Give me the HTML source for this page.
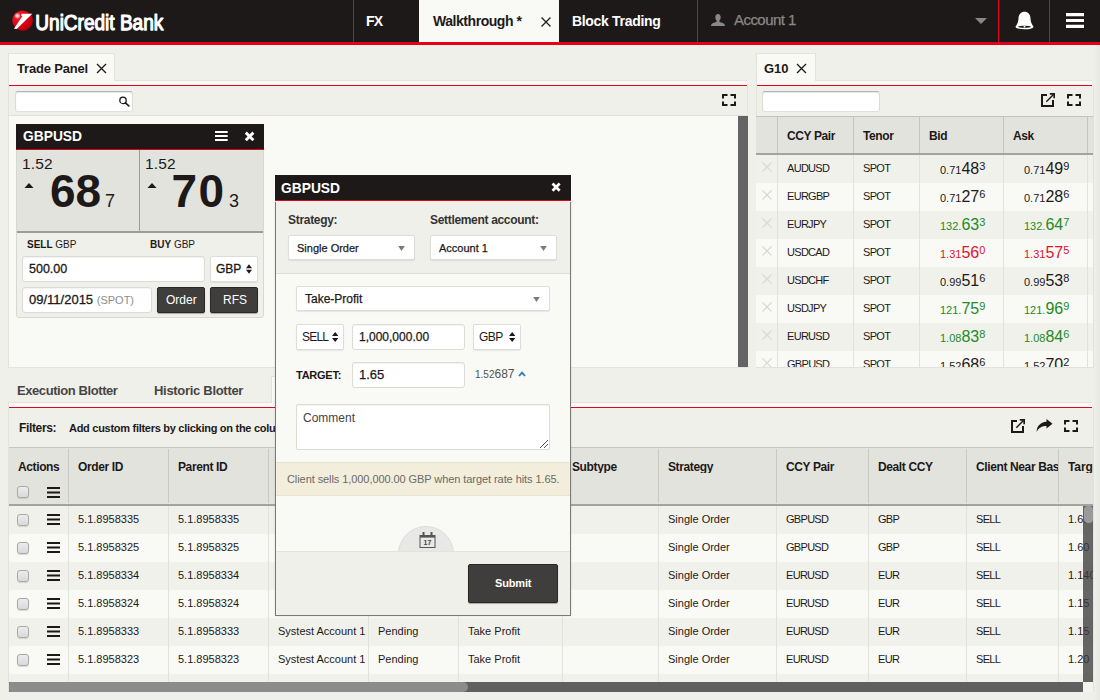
<!DOCTYPE html>
<html>
<head>
<meta charset="utf-8">
<title>UniCredit Bank</title>
<style>
*{box-sizing:border-box;margin:0;padding:0}
html,body{width:1100px;height:700px;overflow:hidden}
body{font-family:"Liberation Sans",sans-serif;font-size:12px;color:#1d1919;background:#f0f0ea;position:relative}
.abs{position:absolute}
.t{position:absolute;white-space:nowrap;line-height:1}
.h{letter-spacing:-.38px}
.u{letter-spacing:-.7px}
.b{font-weight:bold}
/* header */
#hdr{position:absolute;left:0;top:0;width:1100px;height:45px;background:#1d1919;border-bottom:3px solid #e2001a}
.vline{position:absolute;top:0;width:1px;height:42px;background:#e2001a}
/* panels */
.tab{position:absolute;background:#f9f9f5;border:1px solid #e3e3dc;border-bottom:none}
.strip{position:absolute;background:#f9f9f5;border-top:1px solid #e3e3dc}
.red{position:absolute;height:1px;background:#e2001a}
.inp{position:absolute;background:#fff;border:1px solid #dcdcd5;border-radius:3px;box-shadow:inset 0 1px 1px rgba(0,0,0,.05)}
.srch{border-color:#b4b4b0 #dcdcd6 #e2e2dc #dcdcd6;box-shadow:inset 0 1px 1px rgba(0,0,0,.1)}
.sel{position:absolute;background:#fff;border:1px solid #deded8;border-radius:2px;box-shadow:0 1px 1px rgba(0,0,0,.08)}
.btn{position:absolute;background:#403e3c;border:1px solid #2a2827;border-radius:2px;color:#fff;text-align:center;box-shadow:0 1px 1px rgba(0,0,0,.3)}
.vl{position:absolute;width:1px;background:#e2e2dc}
.row{position:absolute;left:0;height:28px}
</style>
</head>
<body>
<!-- HEADER -->
<div id="hdr"></div>
<svg class="abs" style="left:0;top:0" width="200" height="42" viewBox="0 0 200 42">
<defs><radialGradient id="bg1" cx="0.28" cy="0.28" r="0.85"><stop offset="0" stop-color="#ff7a7a"/><stop offset="0.12" stop-color="#f01825"/><stop offset="0.55" stop-color="#e2000f"/><stop offset="1" stop-color="#a80010"/></radialGradient>
<radialGradient id="hl" cx="0.5" cy="0.5" r="0.5"><stop offset="0" stop-color="#fff" stop-opacity=".95"/><stop offset="1" stop-color="#fff" stop-opacity="0"/></radialGradient></defs>
<ellipse cx="22.6" cy="20.6" rx="10.3" ry="10.1" fill="url(#bg1)"/>
<circle cx="17.3" cy="15.8" r="3.4" fill="url(#hl)"/>
<path d="M14 28.8L22.2 16.3L20.9 15.2L21.7 13.8H32.3L16.7 29.1Z" fill="#fff"/>
<text x="35.3" y="29.6" font-family="Liberation Sans" font-size="22.8" fill="#fff" stroke="#fff" stroke-width="1.25" stroke-linejoin="round" textLength="128" lengthAdjust="spacingAndGlyphs">UniCredit Bank</text>
</svg>
<div class="vline" style="left:353px"></div>
<div class="vline" style="left:697px"></div>
<div class="vline" style="left:998px"></div>
<div class="vline" style="left:1049px"></div>
<div class="abs" style="left:419px;top:0;width:140px;height:42px;background:#f9f9f5"></div>
<div class="t b" style="left:366px;top:14px;font-size:14px;color:#fff;letter-spacing:-.7px">FX</div>
<div class="t b" style="left:433px;top:14px;font-size:14px;color:#1d1919;letter-spacing:-.45px">Walkthrough *</div>
<div class="t b" style="left:572px;top:14px;font-size:14px;color:#fff;letter-spacing:-.32px">Block Trading</div>
<div class="t" style="left:734px;top:12px;font-size:15px;color:#8a8886;letter-spacing:-.55px;-webkit-text-stroke:.25px #8a8886">Account 1</div>
<svg class="abs" style="left:710.5px;top:14px" width="14" height="12" viewBox="0 0 14 12"><path d="M7 0C8.7 0 9.7 1.4 9.7 3.3C9.7 4.8 9.1 6 8.4 6.6V7.4C8.4 7.9 8.8 8.1 9.5 8.3C12 9 14 9.6 14 12H0C0 9.6 2 9 4.5 8.3C5.2 8.1 5.6 7.9 5.6 7.4V6.6C4.9 6 4.3 4.8 4.3 3.3C4.3 1.4 5.3 0 7 0Z" fill="#8a8886"/></svg>
<svg class="abs" style="left:975px;top:17.5px" width="12" height="6" viewBox="0 0 12 6"><path d="M0 0H12L6 6Z" fill="#8a8886"/></svg>
<svg class="abs" style="left:1014.6px;top:10.6px" width="19" height="19.4" viewBox="0 0 20 20"><path d="M10 .5C6.4 .5 3.9 3.2 3.7 7.2C3.6 10.5 2.8 13.6 .6 16C.2 17.7 3.5 19 10 19C16.5 19 19.8 17.7 19.4 16C17.2 13.6 16.4 10.5 16.3 7.2C16.1 3.2 13.6 .5 10 .5Z" fill="#fff"/><ellipse cx="10" cy="16.3" rx="6.6" ry="1.1" fill="#1d1919"/><circle cx="10" cy="16.2" r="1" fill="#fff"/></svg>
<svg class="abs" style="left:1066px;top:13px" width="18" height="15" viewBox="0 0 18 15"><path d="M0 1.6H18M0 7.5H18M0 13.4H18" stroke="#fff" stroke-width="3.2"/></svg>
<svg class="abs" style="left:541px;top:16.5px" width="10" height="10" viewBox="0 0 10 10"><path d="M.5 .5L9.5 9.5M9.5 .5L.5 9.5" stroke="#1d1919" stroke-width="1.2"/></svg>

<!-- LEFT PANEL -->
<div id="lp">
<div class="tab" style="left:8px;top:53px;width:107px;height:28px"></div>
<div class="strip" style="left:115px;top:80px;width:632px;height:5px"></div>
<div class="abs" style="left:8px;top:80px;width:1px;height:287px;background:#e3e3dc"></div>
<div class="abs" style="left:9px;top:81px;width:106px;height:4px;background:#f9f9f5"></div>
<div class="red" style="left:9px;top:85px;width:738px"></div>
<div class="abs" style="left:9px;top:86px;width:739px;height:30px;border-bottom:1px solid #e0e0d9;border-right:1px solid #e6e6df"></div>
<div class="abs" style="left:9px;top:116px;width:729px;height:251px;background:#f9f9f5"></div>
<div class="abs" style="left:738px;top:116px;width:10px;height:251px;background:#646464"></div>
<div class="t b" style="left:17px;top:62px;font-size:13px;letter-spacing:-.18px">Trade Panel</div>
<svg class="abs" style="left:95.6px;top:63px" width="11" height="11" viewBox="0 0 11 11"><path d="M1 1L10 10M10 1L1 10" stroke="#1d1919" stroke-width="1.3" fill="none"/></svg>
<div class="inp srch" style="left:15px;top:91px;width:118px;height:20.5px"></div>
<svg class="abs" style="left:118px;top:95.5px" width="12" height="11" viewBox="0 0 12 11"><circle cx="5" cy="4.4" r="3.2" stroke="#1d1919" stroke-width="1.3" fill="none"/><path d="M7.4 6.9L10.8 9.9" stroke="#1d1919" stroke-width="1.6" stroke-linecap="round"/></svg>
<svg class="abs" style="left:722px;top:94px" width="14" height="12" viewBox="0 0 14 12"><path d="M1 4.5V1H5.5M8.5 1H13V4.5M13 7.5V11H8.5M5.5 11H1V7.5" stroke="#1d1919" stroke-width="2" fill="none"/></svg>
<!-- tile -->
<div class="abs" style="left:16px;top:124px;width:248px;height:194px;background:#f0f0ea;border:1px solid #d8d8d2;border-radius:3px"></div>
<div class="abs" style="left:16px;top:124px;width:248px;height:26px;background:#1d1919;border-bottom:1px solid #e2001a"></div>
<div class="abs" style="left:17px;top:150px;width:246px;height:81px;background:#e3e3dd"></div>
<div class="abs" style="left:139px;top:150px;width:1px;height:81px;background:#9c9c98"></div>
<div class="abs" style="left:17px;top:231px;width:246px;height:2px;background:#9c9c98"></div>
<div class="t b" style="left:22.5px;top:128px;font-size:15px;color:#fff;transform:scaleX(.92);transform-origin:0 0">GBPUSD</div>
<svg class="abs" style="left:215.3px;top:131px" width="12.7" height="10" viewBox="0 0 12.7 10"><path d="M0 1H12.7M0 5H12.7M0 9H12.7" stroke="#fff" stroke-width="2.1"/></svg>
<svg class="abs" style="left:244.2px;top:130.6px" width="11.2" height="10.8" viewBox="0 0 10 10"><path d="M1.5 1.5L8.5 8.5M8.5 1.5L1.5 8.5" stroke="#fff" stroke-width="2.7"/></svg>
<div class="t" style="left:22px;top:155.6px;font-size:15.5px;letter-spacing:.15px">1.52</div>
<div class="t" style="left:145px;top:155.6px;font-size:15.5px;letter-spacing:.15px">1.52</div>
<div class="t b" style="left:50px;top:167.5px;font-size:46px">68</div>
<div class="t b" style="left:171.5px;top:167.5px;font-size:46px;letter-spacing:1.3px">70</div>
<div class="t" style="left:105px;top:192px;font-size:18px">7</div>
<div class="t" style="left:229px;top:192px;font-size:18px">3</div>
<svg class="abs" style="left:24px;top:183px" width="10" height="5.3" viewBox="0 0 9 5"><path d="M0 5L4.5 0L9 5Z" fill="#1d1919"/></svg>
<svg class="abs" style="left:147px;top:183px" width="10" height="5.3" viewBox="0 0 9 5"><path d="M0 5L4.5 0L9 5Z" fill="#1d1919"/></svg>
<div class="t" style="left:27px;top:240px;font-size:10px"><b>SELL</b> GBP</div>
<div class="t" style="left:150px;top:240px;font-size:10px"><b>BUY</b> GBP</div>
<div class="inp" style="left:22px;top:256px;width:183px;height:26px"></div>
<div class="t b" style="left:29px;top:263px;font-size:12.5px;font-weight:normal;-webkit-text-stroke:.3px #1d1919">500.00</div>
<div class="sel" style="left:210px;top:256px;width:48px;height:26px"></div>
<div class="t" style="left:216px;top:263px;font-size:12px;-webkit-text-stroke:.3px #1d1919">GBP</div>
<svg class="abs" style="left:246px;top:264px" width="6" height="10" viewBox="0 0 7 11"><path d="M0 4.5L3.5 0L7 4.5ZM0 6.5L3.5 11L7 6.5Z" fill="#1d1919"/></svg>
<div class="inp" style="left:22px;top:287px;width:130px;height:26px"></div>
<div class="t" style="left:29px;top:293px;font-size:13px"><span style="-webkit-text-stroke:.3px #1d1919">09/11/2015</span> <span style="color:#8c8c88;font-size:11px">(SPOT)</span></div>
<div class="btn" style="left:157px;top:287px;width:48px;height:26px"></div>
<div class="t" style="left:166px;top:294px;font-size:12px;color:#fff">Order</div>
<div class="btn" style="left:210px;top:287px;width:48px;height:26px"></div>
<div class="t" style="left:223px;top:294px;font-size:12px;color:#fff">RFS</div>
</div>

<!-- RIGHT PANEL -->
<div id="rp">
<div class="tab" style="left:756px;top:53px;width:60px;height:28px"></div>
<div class="strip" style="left:816px;top:80px;width:276px;height:5px"></div>
<div class="abs" style="left:756px;top:80px;width:1px;height:287px;background:#e3e3dc"></div>
<div class="abs" style="left:757px;top:81px;width:59px;height:4px;background:#f9f9f5"></div>
<div class="red" style="left:757px;top:85px;width:335px"></div>
<div class="t b" style="left:764px;top:62px;font-size:13px">G10</div>
<svg class="abs" style="left:796px;top:63px" width="11" height="11" viewBox="0 0 11 11"><path d="M1 1L10 10M10 1L1 10" stroke="#1d1919" stroke-width="1.3" fill="none"/></svg>
<div class="inp srch" style="left:762px;top:91px;width:118px;height:20.5px"></div>
<svg class="abs" style="left:1040px;top:93px" width="15" height="14" viewBox="0 0 15 14"><path d="M7 2H2V13H13V7" stroke="#1d1919" stroke-width="2" fill="none"/><path d="M6.3 8.7L14 1" stroke="#1d1919" stroke-width="1.4" fill="none"/><path d="M9.8 .9H14.2V5.3" stroke="#1d1919" stroke-width="1.7" fill="none"/></svg>
<svg class="abs" style="left:1067px;top:94px" width="14" height="12" viewBox="0 0 14 12"><path d="M1 4.5V1H5.5M8.5 1H13V4.5M13 7.5V11H8.5M5.5 11H1V7.5" stroke="#1d1919" stroke-width="2" fill="none"/></svg>
<div class="abs" style="left:756px;top:116px;width:337px;height:251px;overflow:hidden;background:#f9f9f5">
<div class="abs" style="left:0;top:0;width:337px;height:39px;background:#e3e3dd;border-top:1px solid #c4c4be;border-bottom:2px solid #a3a39f"></div>
<div class="abs" style="left:21px;top:1px;width:1px;height:36px;background:#c6c6c0"></div>
<div class="abs" style="left:97px;top:1px;width:1px;height:36px;background:#c6c6c0"></div>
<div class="abs" style="left:163px;top:1px;width:1px;height:36px;background:#c6c6c0"></div>
<div class="abs" style="left:247px;top:1px;width:1px;height:36px;background:#c6c6c0"></div>
<div class="abs" style="left:331px;top:1px;width:1px;height:36px;background:#c6c6c0"></div>
<div class="t b h" style="left:31px;top:13px;font-size:12px;top:14px">CCY Pair</div>
<div class="t b h" style="left:107px;top:13px;font-size:12px;top:14px">Tenor</div>
<div class="t b h" style="left:173px;top:13px;font-size:12px;top:14px">Bid</div>
<div class="t b h" style="left:257px;top:13px;font-size:12px;top:14px">Ask</div>
<div class="row" style="top:39px;width:337px;background:#f1f1ec">
<svg class="abs" style="left:5.5px;top:6.5px" width="10" height="10" viewBox="0 0 10 10"><path d="M.5 .5L9.5 9.5M9.5 .5L.5 9.5" stroke="#d8d8d4" stroke-width="1.1"/></svg>
<div class="t u" style="left:31px;top:8px;font-size:11px">AUDUSD</div>
<div class="t u" style="left:107px;top:8px;font-size:11px">SPOT</div>
<div class="t" style="left:184px;top:4px;font-size:11px;color:#1d1919;line-height:20px">0.71<span style="font-size:16px">48</span><span style="font-size:11px;position:relative;top:-4px">3</span></div>
<div class="t" style="left:268px;top:4px;font-size:11px;color:#1d1919;line-height:20px">0.71<span style="font-size:16px">49</span><span style="font-size:11px;position:relative;top:-4px">9</span></div>
</div>
<div class="row" style="top:67px;width:337px;background:#f9f9f5">
<svg class="abs" style="left:5.5px;top:6.5px" width="10" height="10" viewBox="0 0 10 10"><path d="M.5 .5L9.5 9.5M9.5 .5L.5 9.5" stroke="#d8d8d4" stroke-width="1.1"/></svg>
<div class="t u" style="left:31px;top:8px;font-size:11px">EURGBP</div>
<div class="t u" style="left:107px;top:8px;font-size:11px">SPOT</div>
<div class="t" style="left:184px;top:4px;font-size:11px;color:#1d1919;line-height:20px">0.71<span style="font-size:16px">27</span><span style="font-size:11px;position:relative;top:-4px">6</span></div>
<div class="t" style="left:268px;top:4px;font-size:11px;color:#1d1919;line-height:20px">0.71<span style="font-size:16px">28</span><span style="font-size:11px;position:relative;top:-4px">6</span></div>
</div>
<div class="row" style="top:95px;width:337px;background:#f1f1ec">
<svg class="abs" style="left:5.5px;top:6.5px" width="10" height="10" viewBox="0 0 10 10"><path d="M.5 .5L9.5 9.5M9.5 .5L.5 9.5" stroke="#d8d8d4" stroke-width="1.1"/></svg>
<div class="t u" style="left:31px;top:8px;font-size:11px">EURJPY</div>
<div class="t u" style="left:107px;top:8px;font-size:11px">SPOT</div>
<div class="t" style="left:184px;top:4px;font-size:11px;color:#228b26;line-height:20px">132.<span style="font-size:16px">63</span><span style="font-size:11px;position:relative;top:-4px">3</span></div>
<div class="t" style="left:268px;top:4px;font-size:11px;color:#228b26;line-height:20px">132.<span style="font-size:16px">64</span><span style="font-size:11px;position:relative;top:-4px">7</span></div>
</div>
<div class="row" style="top:123px;width:337px;background:#f9f9f5">
<svg class="abs" style="left:5.5px;top:6.5px" width="10" height="10" viewBox="0 0 10 10"><path d="M.5 .5L9.5 9.5M9.5 .5L.5 9.5" stroke="#d8d8d4" stroke-width="1.1"/></svg>
<div class="t u" style="left:31px;top:8px;font-size:11px">USDCAD</div>
<div class="t u" style="left:107px;top:8px;font-size:11px">SPOT</div>
<div class="t" style="left:184px;top:4px;font-size:11px;color:#de1430;line-height:20px">1.31<span style="font-size:16px">56</span><span style="font-size:11px;position:relative;top:-4px">0</span></div>
<div class="t" style="left:268px;top:4px;font-size:11px;color:#de1430;line-height:20px">1.31<span style="font-size:16px">57</span><span style="font-size:11px;position:relative;top:-4px">5</span></div>
</div>
<div class="row" style="top:151px;width:337px;background:#f1f1ec">
<svg class="abs" style="left:5.5px;top:6.5px" width="10" height="10" viewBox="0 0 10 10"><path d="M.5 .5L9.5 9.5M9.5 .5L.5 9.5" stroke="#d8d8d4" stroke-width="1.1"/></svg>
<div class="t u" style="left:31px;top:8px;font-size:11px">USDCHF</div>
<div class="t u" style="left:107px;top:8px;font-size:11px">SPOT</div>
<div class="t" style="left:184px;top:4px;font-size:11px;color:#1d1919;line-height:20px">0.99<span style="font-size:16px">51</span><span style="font-size:11px;position:relative;top:-4px">6</span></div>
<div class="t" style="left:268px;top:4px;font-size:11px;color:#1d1919;line-height:20px">0.99<span style="font-size:16px">53</span><span style="font-size:11px;position:relative;top:-4px">8</span></div>
</div>
<div class="row" style="top:179px;width:337px;background:#f9f9f5">
<svg class="abs" style="left:5.5px;top:6.5px" width="10" height="10" viewBox="0 0 10 10"><path d="M.5 .5L9.5 9.5M9.5 .5L.5 9.5" stroke="#d8d8d4" stroke-width="1.1"/></svg>
<div class="t u" style="left:31px;top:8px;font-size:11px">USDJPY</div>
<div class="t u" style="left:107px;top:8px;font-size:11px">SPOT</div>
<div class="t" style="left:184px;top:4px;font-size:11px;color:#228b26;line-height:20px">121.<span style="font-size:16px">75</span><span style="font-size:11px;position:relative;top:-4px">9</span></div>
<div class="t" style="left:268px;top:4px;font-size:11px;color:#228b26;line-height:20px">121.<span style="font-size:16px">96</span><span style="font-size:11px;position:relative;top:-4px">9</span></div>
</div>
<div class="row" style="top:207px;width:337px;background:#f1f1ec">
<svg class="abs" style="left:5.5px;top:6.5px" width="10" height="10" viewBox="0 0 10 10"><path d="M.5 .5L9.5 9.5M9.5 .5L.5 9.5" stroke="#d8d8d4" stroke-width="1.1"/></svg>
<div class="t u" style="left:31px;top:8px;font-size:11px">EURUSD</div>
<div class="t u" style="left:107px;top:8px;font-size:11px">SPOT</div>
<div class="t" style="left:184px;top:4px;font-size:11px;color:#228b26;line-height:20px">1.08<span style="font-size:16px">83</span><span style="font-size:11px;position:relative;top:-4px">8</span></div>
<div class="t" style="left:268px;top:4px;font-size:11px;color:#228b26;line-height:20px">1.08<span style="font-size:16px">84</span><span style="font-size:11px;position:relative;top:-4px">6</span></div>
</div>
<div class="row" style="top:235px;width:337px;background:#f9f9f5">
<svg class="abs" style="left:5.5px;top:6.5px" width="10" height="10" viewBox="0 0 10 10"><path d="M.5 .5L9.5 9.5M9.5 .5L.5 9.5" stroke="#d8d8d4" stroke-width="1.1"/></svg>
<div class="t u" style="left:31px;top:8px;font-size:11px">GBPUSD</div>
<div class="t u" style="left:107px;top:8px;font-size:11px">SPOT</div>
<div class="t" style="left:184px;top:4px;font-size:11px;color:#1d1919;line-height:20px">1.52<span style="font-size:16px">68</span><span style="font-size:11px;position:relative;top:-4px">6</span></div>
<div class="t" style="left:268px;top:4px;font-size:11px;color:#1d1919;line-height:20px">1.52<span style="font-size:16px">70</span><span style="font-size:11px;position:relative;top:-4px">2</span></div>
</div>
<div class="vl" style="left:21px;top:39px;height:212px"></div>
<div class="vl" style="left:97px;top:39px;height:212px"></div>
<div class="vl" style="left:163px;top:39px;height:212px"></div>
<div class="vl" style="left:247px;top:39px;height:212px"></div>
<div class="vl" style="left:331px;top:39px;height:212px"></div>
</div>
</div>
<!-- BLOTTER -->
<div id="bl">
<div class="abs" style="left:271px;top:376px;width:120px;height:27px;background:#f9f9f5;border:1px solid #e3e3dc;border-bottom:none"></div>
<div class="strip" style="left:8px;top:402px;width:1084px;height:5px"></div>
<div class="abs" style="left:272px;top:402px;width:118px;height:2px;background:#f9f9f5"></div>
<div class="red" style="left:9px;top:407px;width:1083px"></div>
<div class="abs" style="left:8px;top:402px;width:1px;height:290px;background:#e3e3dc"></div>
<div class="t b" style="left:17px;top:384px;font-size:13px;color:#474543;letter-spacing:-.42px">Execution Blotter</div>
<div class="t b" style="left:154px;top:384px;font-size:13px;color:#474543;letter-spacing:-.3px">Historic Blotter</div>
<div class="t b" style="left:19px;top:422px;font-size:12px;letter-spacing:-.35px">Filters:</div>
<div class="t b" style="left:69px;top:423px;font-size:11px;letter-spacing:-.28px">Add custom filters by clicking on the column headers</div>
<svg class="abs" style="left:1010px;top:418.5px" width="15" height="14" viewBox="0 0 15 14"><path d="M7 2H2V13H13V7" stroke="#1d1919" stroke-width="2" fill="none"/><path d="M6.3 8.7L14 1" stroke="#1d1919" stroke-width="1.4" fill="none"/><path d="M9.8 .9H14.2V5.3" stroke="#1d1919" stroke-width="1.7" fill="none"/></svg>
<svg class="abs" style="left:1036px;top:419px" width="17" height="13" viewBox="0 0 17 13"><path d="M10.5 0L16.5 4.8L10.5 9.6V6.9C5.8 6.9 2.6 8.6 .6 13C.7 7.4 4.2 3.2 10.5 2.8Z" fill="#1d1919"/></svg>
<svg class="abs" style="left:1064px;top:420px" width="14" height="12" viewBox="0 0 14 12"><path d="M1 4.5V1H5.5M8.5 1H13V4.5M13 7.5V11H8.5M5.5 11H1V7.5" stroke="#1d1919" stroke-width="2" fill="none"/></svg>
<div class="abs" style="left:9px;top:447px;width:1084px;height:245px;overflow:hidden;background:#f9f9f5">
<div class="abs" style="left:0;top:0;width:1084px;height:59px;background:#e3e3dd;border-top:1px solid #c6c6c0;border-bottom:2px solid #a3a39f"></div>
<div class="abs" style="left:59px;top:2px;width:1px;height:54px;background:#c9c9c3"></div>
<div class="abs" style="left:159px;top:2px;width:1px;height:54px;background:#c9c9c3"></div>
<div class="abs" style="left:259px;top:2px;width:1px;height:54px;background:#c9c9c3"></div>
<div class="abs" style="left:359px;top:2px;width:1px;height:54px;background:#c9c9c3"></div>
<div class="abs" style="left:449px;top:2px;width:1px;height:54px;background:#c9c9c3"></div>
<div class="abs" style="left:553px;top:2px;width:1px;height:54px;background:#c9c9c3"></div>
<div class="abs" style="left:649px;top:2px;width:1px;height:54px;background:#c9c9c3"></div>
<div class="abs" style="left:767px;top:2px;width:1px;height:54px;background:#c9c9c3"></div>
<div class="abs" style="left:859px;top:2px;width:1px;height:54px;background:#c9c9c3"></div>
<div class="abs" style="left:957px;top:2px;width:1px;height:54px;background:#c9c9c3"></div>
<div class="abs" style="left:1049px;top:2px;width:1px;height:54px;background:#c9c9c3"></div>
<div class="t b h" style="left:9px;top:14px;font-size:12px;width:58px;overflow:hidden">Actions</div>
<div class="t b h" style="left:69px;top:14px;font-size:12px;width:98px;overflow:hidden">Order ID</div>
<div class="t b h" style="left:169px;top:14px;font-size:12px;width:98px;overflow:hidden">Parent ID</div>
<div class="t b h" style="left:269px;top:14px;font-size:12px;width:98px;overflow:hidden">Account</div>
<div class="t b h" style="left:369px;top:14px;font-size:12px;width:88px;overflow:hidden">Status</div>
<div class="t b h" style="left:459px;top:14px;font-size:12px;width:102px;overflow:hidden">Order Type</div>
<div class="t b h" style="left:563px;top:14px;font-size:12px;width:94px;overflow:hidden">Subtype</div>
<div class="t b h" style="left:659px;top:14px;font-size:12px;width:116px;overflow:hidden">Strategy</div>
<div class="t b h" style="left:777px;top:14px;font-size:12px;width:90px;overflow:hidden">CCY Pair</div>
<div class="t b h" style="left:869px;top:14px;font-size:12px;width:96px;overflow:hidden">Dealt CCY</div>
<div class="t b h" style="left:967px;top:14px;font-size:12px;width:82px;overflow:hidden">Client Near Base</div>
<div class="t b" style="left:1059px;top:14px;font-size:12px;width:30px;overflow:hidden;letter-spacing:-.1px">Target</div>
<div class="abs" style="left:8px;top:39px;width:12px;height:12px;border:1px solid #a9a9a6;border-radius:3px;background:linear-gradient(#ececec,#d9d9d9);box-shadow:0 1px 1px rgba(0,0,0,.12)"></div>
<svg class="abs" style="left:38px;top:40px" width="13" height="11" viewBox="0 0 13 11"><path d="M0 1H13M0 5.5H13M0 10H13" stroke="#1d1919" stroke-width="2"/></svg>
<div class="row" style="top:59px;width:1084px;background:#f1f1ec">
<div class="abs" style="left:8px;top:8px;width:12px;height:12px;border:1px solid #a9a9a6;border-radius:3px;background:linear-gradient(#ececec,#d9d9d9);box-shadow:0 1px 1px rgba(0,0,0,.12)"></div>
<svg class="abs" style="left:38px;top:8px" width="13" height="11" viewBox="0 0 13 11"><path d="M0 1H13M0 5.5H13M0 10H13" stroke="#1d1919" stroke-width="2"/></svg>
<div class="t" style="left:69px;top:8px;font-size:11px">5.1.8958335</div>
<div class="t" style="left:169px;top:8px;font-size:11px">5.1.8958335</div>
<div class="t" style="left:269px;top:8px;font-size:11px">Systest Account 1</div>
<div class="t" style="left:369px;top:8px;font-size:11px">Pending</div>
<div class="t" style="left:459px;top:8px;font-size:11px">Take Profit</div>
<div class="t" style="left:659px;top:8px;font-size:11px">Single Order</div>
<div class="t u" style="left:777px;top:8px;font-size:11px">GBPUSD</div>
<div class="t u" style="left:869px;top:8px;font-size:11px">GBP</div>
<div class="t u" style="left:967px;top:8px;font-size:11px">SELL</div>
<div class="t" style="left:1059px;top:8px;font-size:11px">1.65</div>
</div>
<div class="row" style="top:87px;width:1084px;background:#f9f9f5">
<div class="abs" style="left:8px;top:8px;width:12px;height:12px;border:1px solid #a9a9a6;border-radius:3px;background:linear-gradient(#ececec,#d9d9d9);box-shadow:0 1px 1px rgba(0,0,0,.12)"></div>
<svg class="abs" style="left:38px;top:8px" width="13" height="11" viewBox="0 0 13 11"><path d="M0 1H13M0 5.5H13M0 10H13" stroke="#1d1919" stroke-width="2"/></svg>
<div class="t" style="left:69px;top:8px;font-size:11px">5.1.8958325</div>
<div class="t" style="left:169px;top:8px;font-size:11px">5.1.8958325</div>
<div class="t" style="left:269px;top:8px;font-size:11px">Systest Account 1</div>
<div class="t" style="left:369px;top:8px;font-size:11px">Pending</div>
<div class="t" style="left:459px;top:8px;font-size:11px">Take Profit</div>
<div class="t" style="left:659px;top:8px;font-size:11px">Single Order</div>
<div class="t u" style="left:777px;top:8px;font-size:11px">GBPUSD</div>
<div class="t u" style="left:869px;top:8px;font-size:11px">GBP</div>
<div class="t u" style="left:967px;top:8px;font-size:11px">SELL</div>
<div class="t" style="left:1059px;top:8px;font-size:11px">1.60</div>
</div>
<div class="row" style="top:115px;width:1084px;background:#f1f1ec">
<div class="abs" style="left:8px;top:8px;width:12px;height:12px;border:1px solid #a9a9a6;border-radius:3px;background:linear-gradient(#ececec,#d9d9d9);box-shadow:0 1px 1px rgba(0,0,0,.12)"></div>
<svg class="abs" style="left:38px;top:8px" width="13" height="11" viewBox="0 0 13 11"><path d="M0 1H13M0 5.5H13M0 10H13" stroke="#1d1919" stroke-width="2"/></svg>
<div class="t" style="left:69px;top:8px;font-size:11px">5.1.8958334</div>
<div class="t" style="left:169px;top:8px;font-size:11px">5.1.8958334</div>
<div class="t" style="left:269px;top:8px;font-size:11px">Systest Account 1</div>
<div class="t" style="left:369px;top:8px;font-size:11px">Pending</div>
<div class="t" style="left:459px;top:8px;font-size:11px">Take Profit</div>
<div class="t" style="left:659px;top:8px;font-size:11px">Single Order</div>
<div class="t u" style="left:777px;top:8px;font-size:11px">EURUSD</div>
<div class="t u" style="left:869px;top:8px;font-size:11px">EUR</div>
<div class="t u" style="left:967px;top:8px;font-size:11px">SELL</div>
<div class="t" style="left:1059px;top:8px;font-size:11px">1.140</div>
</div>
<div class="row" style="top:143px;width:1084px;background:#f9f9f5">
<div class="abs" style="left:8px;top:8px;width:12px;height:12px;border:1px solid #a9a9a6;border-radius:3px;background:linear-gradient(#ececec,#d9d9d9);box-shadow:0 1px 1px rgba(0,0,0,.12)"></div>
<svg class="abs" style="left:38px;top:8px" width="13" height="11" viewBox="0 0 13 11"><path d="M0 1H13M0 5.5H13M0 10H13" stroke="#1d1919" stroke-width="2"/></svg>
<div class="t" style="left:69px;top:8px;font-size:11px">5.1.8958324</div>
<div class="t" style="left:169px;top:8px;font-size:11px">5.1.8958324</div>
<div class="t" style="left:269px;top:8px;font-size:11px">Systest Account 1</div>
<div class="t" style="left:369px;top:8px;font-size:11px">Pending</div>
<div class="t" style="left:459px;top:8px;font-size:11px">Take Profit</div>
<div class="t" style="left:659px;top:8px;font-size:11px">Single Order</div>
<div class="t u" style="left:777px;top:8px;font-size:11px">EURUSD</div>
<div class="t u" style="left:869px;top:8px;font-size:11px">EUR</div>
<div class="t u" style="left:967px;top:8px;font-size:11px">SELL</div>
<div class="t" style="left:1059px;top:8px;font-size:11px">1.15</div>
</div>
<div class="row" style="top:171px;width:1084px;background:#f1f1ec">
<div class="abs" style="left:8px;top:8px;width:12px;height:12px;border:1px solid #a9a9a6;border-radius:3px;background:linear-gradient(#ececec,#d9d9d9);box-shadow:0 1px 1px rgba(0,0,0,.12)"></div>
<svg class="abs" style="left:38px;top:8px" width="13" height="11" viewBox="0 0 13 11"><path d="M0 1H13M0 5.5H13M0 10H13" stroke="#1d1919" stroke-width="2"/></svg>
<div class="t" style="left:69px;top:8px;font-size:11px">5.1.8958333</div>
<div class="t" style="left:169px;top:8px;font-size:11px">5.1.8958333</div>
<div class="t" style="left:269px;top:8px;font-size:11px">Systest Account 1</div>
<div class="t" style="left:369px;top:8px;font-size:11px">Pending</div>
<div class="t" style="left:459px;top:8px;font-size:11px">Take Profit</div>
<div class="t" style="left:659px;top:8px;font-size:11px">Single Order</div>
<div class="t u" style="left:777px;top:8px;font-size:11px">EURUSD</div>
<div class="t u" style="left:869px;top:8px;font-size:11px">EUR</div>
<div class="t u" style="left:967px;top:8px;font-size:11px">SELL</div>
<div class="t" style="left:1059px;top:8px;font-size:11px">1.15</div>
</div>
<div class="row" style="top:199px;width:1084px;background:#f9f9f5">
<div class="abs" style="left:8px;top:8px;width:12px;height:12px;border:1px solid #a9a9a6;border-radius:3px;background:linear-gradient(#ececec,#d9d9d9);box-shadow:0 1px 1px rgba(0,0,0,.12)"></div>
<svg class="abs" style="left:38px;top:8px" width="13" height="11" viewBox="0 0 13 11"><path d="M0 1H13M0 5.5H13M0 10H13" stroke="#1d1919" stroke-width="2"/></svg>
<div class="t" style="left:69px;top:8px;font-size:11px">5.1.8958323</div>
<div class="t" style="left:169px;top:8px;font-size:11px">5.1.8958323</div>
<div class="t" style="left:269px;top:8px;font-size:11px">Systest Account 1</div>
<div class="t" style="left:369px;top:8px;font-size:11px">Pending</div>
<div class="t" style="left:459px;top:8px;font-size:11px">Take Profit</div>
<div class="t" style="left:659px;top:8px;font-size:11px">Single Order</div>
<div class="t u" style="left:777px;top:8px;font-size:11px">EURUSD</div>
<div class="t u" style="left:869px;top:8px;font-size:11px">EUR</div>
<div class="t u" style="left:967px;top:8px;font-size:11px">SELL</div>
<div class="t" style="left:1059px;top:8px;font-size:11px">1.20</div>
</div>
<div class="row" style="top:227px;width:1084px;background:#f1f1ec">
<div class="abs" style="left:8px;top:8px;width:12px;height:12px;border:1px solid #a9a9a6;border-radius:3px;background:linear-gradient(#ececec,#d9d9d9);box-shadow:0 1px 1px rgba(0,0,0,.12)"></div>
<svg class="abs" style="left:38px;top:8px" width="13" height="11" viewBox="0 0 13 11"><path d="M0 1H13M0 5.5H13M0 10H13" stroke="#1d1919" stroke-width="2"/></svg>
<div class="t" style="left:69px;top:8px;font-size:11px">5.1.8958332</div>
<div class="t" style="left:169px;top:8px;font-size:11px">5.1.8958332</div>
<div class="t" style="left:269px;top:8px;font-size:11px">Systest Account 1</div>
<div class="t" style="left:369px;top:8px;font-size:11px">Pending</div>
<div class="t" style="left:459px;top:8px;font-size:11px">Take Profit</div>
<div class="t" style="left:659px;top:8px;font-size:11px">Single Order</div>
<div class="t u" style="left:777px;top:8px;font-size:11px">EURUSD</div>
<div class="t u" style="left:869px;top:8px;font-size:11px">EUR</div>
<div class="t u" style="left:967px;top:8px;font-size:11px">SELL</div>
<div class="t" style="left:1059px;top:8px;font-size:11px">1.20</div>
</div>
<div class="vl" style="left:59px;top:59px;height:186px"></div>
<div class="vl" style="left:159px;top:59px;height:186px"></div>
<div class="vl" style="left:259px;top:59px;height:186px"></div>
<div class="vl" style="left:359px;top:59px;height:186px"></div>
<div class="vl" style="left:449px;top:59px;height:186px"></div>
<div class="vl" style="left:553px;top:59px;height:186px"></div>
<div class="vl" style="left:649px;top:59px;height:186px"></div>
<div class="vl" style="left:767px;top:59px;height:186px"></div>
<div class="vl" style="left:859px;top:59px;height:186px"></div>
<div class="vl" style="left:957px;top:59px;height:186px"></div>
<div class="vl" style="left:1049px;top:59px;height:186px"></div>
<div class="abs" style="left:1074px;top:59px;width:10px;height:177px;background:rgba(60,60,60,.78)"></div>
<div class="abs" style="left:1075px;top:59px;width:9px;height:17px;background:#9a9a9a;border-radius:4px"></div>
<div class="abs" style="left:0;top:235px;width:1074px;height:10px;background:#606060"></div>
<div class="abs" style="left:0;top:235px;width:459px;height:10px;background:#8c8c8c;border-radius:2px 5px 5px 2px"></div>
<div class="abs" style="left:1074px;top:235px;width:10px;height:10px;background:#f4f4ef"></div>
</div>
</div>
<div class="abs" style="left:1093px;top:86px;width:1px;height:282px;background:#e2e2dc"></div>
<div class="abs" style="left:756px;top:367px;width:338px;height:1px;background:#e2e2dc"></div>
<div class="abs" style="left:8px;top:367px;width:741px;height:1px;background:#e4e4de"></div>
<div class="abs" style="left:1093px;top:408px;width:1px;height:284px;background:#e2e2dc"></div>
<div class="abs" style="left:1094px;top:45px;width:6px;height:655px;background:linear-gradient(90deg,rgba(0,0,0,0),rgba(0,0,0,.035))"></div>
<!-- DIALOG -->
<div id="dlg">
<div class="abs" style="left:275px;top:175px;width:296px;height:441px;background:#f9f9f5;border:1px solid #7b7976;border-top:none;box-shadow:0 0 2px rgba(0,0,0,.12)"></div>
<div class="abs" style="left:275px;top:175px;width:296px;height:26px;background:#1d1919;border-bottom:1px solid #e2001a;box-shadow:0 0 0 1px rgba(255,255,255,.85)"></div>
<div class="t b" style="left:281px;top:179.5px;font-size:15px;color:#fff;transform:scaleX(.92);transform-origin:0 0">GBPUSD</div>
<svg class="abs" style="left:551.4px;top:182.4px" width="10.2" height="10.2" viewBox="0 0 10 10"><path d="M1.5 1.5L8.5 8.5M8.5 1.5L1.5 8.5" stroke="#fff" stroke-width="2.7"/></svg>
<div class="abs" style="left:276px;top:201px;width:294px;height:73px;background:#f0f0ea;border-bottom:1px solid #deded8"></div>
<div class="t b" style="left:288px;top:214px;font-size:12px;color:#333;letter-spacing:-.3px">Strategy:</div>
<div class="t b" style="left:430px;top:214px;font-size:12px;color:#333;letter-spacing:-.32px">Settlement account:</div>
<div class="sel" style="left:288px;top:235px;width:127px;height:25px"></div>
<div class="t" style="left:297px;top:243px;font-size:11px;-webkit-text-stroke:.25px #1d1919">Single Order</div>
<svg class="abs" style="left:398px;top:246px" width="7" height="5" viewBox="0 0 8 6"><path d="M0 0H8L4 6Z" fill="#7d7b79"/></svg>
<div class="sel" style="left:430px;top:235px;width:127px;height:25px"></div>
<div class="t" style="left:439px;top:243px;font-size:11px;-webkit-text-stroke:.25px #1d1919">Account 1</div>
<svg class="abs" style="left:540px;top:246px" width="7" height="5" viewBox="0 0 8 6"><path d="M0 0H8L4 6Z" fill="#7d7b79"/></svg>
<div class="sel" style="left:296px;top:286px;width:254px;height:25px"></div>
<div class="t" style="left:305px;top:293px;font-size:12px;-webkit-text-stroke:.25px #1d1919">Take-Profit</div>
<svg class="abs" style="left:533px;top:297px" width="7" height="5" viewBox="0 0 8 6"><path d="M0 0H8L4 6Z" fill="#7d7b79"/></svg>
<div class="sel" style="left:296px;top:324px;width:48px;height:26px"></div>
<div class="t" style="left:302px;top:331px;font-size:12px;letter-spacing:-.8px">SELL</div>
<svg class="abs" style="left:332px;top:331.5px" width="6.4" height="10" viewBox="0 0 7 11"><path d="M0 4.3L3.5 0L7 4.3ZM0 6.7L3.5 11L7 6.7Z" fill="#1d1919"/></svg>
<div class="inp" style="left:352px;top:324px;width:113px;height:26px"></div>
<div class="t" style="left:359px;top:331px;font-size:12px;-webkit-text-stroke:.25px #1d1919">1,000,000.00</div>
<div class="sel" style="left:473px;top:324px;width:48px;height:26px"></div>
<div class="t" style="left:479px;top:331px;font-size:12px;letter-spacing:-.5px">GBP</div>
<svg class="abs" style="left:509px;top:331.5px" width="6.4" height="10" viewBox="0 0 7 11"><path d="M0 4.3L3.5 0L7 4.3ZM0 6.7L3.5 11L7 6.7Z" fill="#1d1919"/></svg>
<div class="t b" style="left:296px;top:370px;font-size:11px;letter-spacing:-.25px">TARGET:</div>
<div class="inp" style="left:352px;top:362px;width:113px;height:26px"></div>
<div class="t" style="left:359px;top:368px;font-size:13px;-webkit-text-stroke:.25px #1d1919">1.65</div>
<div class="t" style="left:475px;top:366px;font-size:10px;color:#555;line-height:16px">1.52<span style="font-size:12px">687</span></div>
<svg class="abs" style="left:518px;top:371px" width="8" height="6" viewBox="0 0 8 6"><path d="M1 5L4 1.6L7 5" stroke="#2a7ab8" stroke-width="1.8" fill="none"/></svg>
<div class="inp" style="left:296px;top:404px;width:254px;height:46px;border-radius:2px"></div>
<div class="t" style="left:303px;top:412px;font-size:12px;color:#444">Comment</div>
<svg class="abs" style="left:540px;top:440px" width="8" height="8" viewBox="0 0 8 8"><path d="M0 8L8 0M4 8L8 4" stroke="#555" stroke-width="1"/></svg>
<div class="abs" style="left:276px;top:462px;width:294px;height:34px;background:#f3eedc;border-top:1px solid #e8e3d0;border-bottom:1px solid #e8e3d0"></div>
<div class="t" style="left:287px;top:474px;font-size:11px;color:#6b6966;letter-spacing:-.075px">Client sells 1,000,000.00 GBP when target rate hits 1.65.</div>
<div class="abs" style="left:276px;top:500px;width:294px;height:51px;overflow:hidden"><div class="abs" style="left:122.4px;top:25.6px;width:56px;height:56px;border-radius:28px;background:#e8e8e6;border:1px solid #dcdcd8"></div>
<svg class="abs" style="left:142.5px;top:32px" width="17" height="16" viewBox="0 0 17 16"><rect x="1" y="3.5" width="15" height="12" fill="none" stroke="#555" stroke-width="1"/><rect x="1" y="3" width="15" height="2.6" fill="#555"/><rect x="3.5" y="0" width="2" height="4" fill="#555"/><rect x="11.5" y="0" width="2" height="4" fill="#555"/><text x="8.5" y="13.3" font-size="7" font-family="Liberation Sans" text-anchor="middle" fill="#444" font-weight="bold">17</text></svg></div>
<div class="abs" style="left:276px;top:551px;width:294px;height:64px;background:#f0f0ea;border-top:1px solid #e3e3dc"></div>
<div class="btn" style="left:468px;top:564px;width:90px;height:39px"></div>
<div class="t b" style="left:495px;top:578px;font-size:11px;color:#fff;letter-spacing:-.15px">Submit</div>
</div>
</body>
</html>
